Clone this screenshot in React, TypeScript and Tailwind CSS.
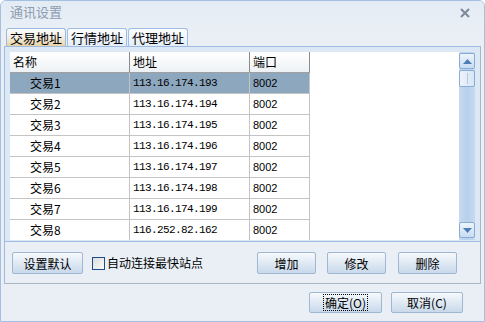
const rows = [
  { name: "交易1", ip: "113.16.174.193", port: "8002" },
  { name: "交易2", ip: "113.16.174.194", port: "8002" },
  { name: "交易3", ip: "113.16.174.195", port: "8002" },
  { name: "交易4", ip: "113.16.174.196", port: "8002" },
  { name: "交易5", ip: "113.16.174.197", port: "8002" },
  { name: "交易6", ip: "113.16.174.198", port: "8002" },
  { name: "交易7", ip: "113.16.174.199", port: "8002" },
  { name: "交易8", ip: "116.252.82.162", port: "8002" },
];

const cjk = { fontFamily: '"Noto Sans CJK SC", "Liberation Sans", sans-serif' };
const mono = { fontFamily: '"Liberation Mono", "DejaVu Sans Mono", monospace' };

const Btn = ({ label, className = "", focus = false }: { label: string; className?: string; focus?: boolean }) => (
  <div className={"flex items-center justify-center rounded-[2px] border border-[#9fb7d1] bg-gradient-to-b from-[#f6f9fc] to-[#c9d9eb] text-[12px] text-black " + className}>
    <span className={focus ? "outline outline-1 outline-dotted outline-black px-[1px] leading-[15px]" : "leading-[15px]"}>{label}</span>
  </div>
);

const Tab = ({ label, active = false }: { label: string; active?: boolean }) => (
  <div
    className={
      "h-[18px] w-[60px] flex items-center justify-center rounded-t-[3px] border border-b-0 text-[13px] text-black " +
      (active
        ? "border-[#9dbbe0] bg-gradient-to-b from-[#fbfcfd] via-[#f2ede2] to-[#e8d2a4]"
        : "border-[#9dbfe6] bg-gradient-to-b from-[#fdfeff] to-[#e3edf8]")
    }
  >
    {label}
  </div>
);

export default function App() {
  return (
    <div className="w-[485px] h-[322px] overflow-hidden bg-[#e9eff5] border border-[#a3c0e2] rounded-t-[6px] flex flex-col" style={cjk}>
      {/* title */}
      <div className="h-[28px] flex items-center justify-between pl-[9px] pr-[14px] bg-gradient-to-b from-[#e3ebf4] to-[#e9eff5]">
        <span className="text-[13px] text-[#8d9bb0] -mt-[6px]">通讯设置</span>
        <svg width="10" height="10" viewBox="0 0 10 10" className="-mt-[5px]">
          <path d="M1 1 L9 9 M9 1 L1 9" stroke="#7c889a" strokeWidth="2" />
        </svg>
      </div>

      {/* tabs */}
      <div className="flex items-end gap-[1px] pl-[5px] h-[17px]">
        <Tab label="交易地址" active />
        <Tab label="行情地址" />
        <Tab label="代理地址" />
      </div>

      {/* panel */}
      <div className="ml-[3px] w-[477px] h-[238px] border border-[#9dbbe0] border-r-[#a9b6c4] border-b-[#a9b6c4] flex flex-col">
        <div className="pl-[5px] pr-[5px] pt-[5px] pb-[1px] bg-[#dde8f5] border-b border-[#9dbbe0] flex">
          <div className="h-[188px] flex-1 bg-white flex overflow-hidden">
            <div className="flex-1 flex flex-col">
              <div className="h-[21px] flex text-[12px] bg-gradient-to-b from-white to-[#eef1f4] border-b border-[#a0a0a0] w-[300px] shrink-0">
                <div className="w-[120px] pl-[3px] flex items-center border-r border-[#8c8c8c]">名称</div>
                <div className="w-[120px] pl-[3px] flex items-center border-r border-[#8c8c8c]">地址</div>
                <div className="w-[60px] pl-[3px] flex items-center border-r border-[#8c8c8c]">端口</div>
              </div>
              {rows.map((r, i) => (
                <div key={r.name} className={"h-[21px] shrink-0 flex w-[300px] text-[12px] text-black border-b border-[#c4c4c4] " + (i === 0 ? "bg-[#8da7bf]" : "")}>
                  <div className="w-[120px] pl-[20px] flex items-center border-r border-[#c4c4c4]">{r.name}</div>
                  <div className="w-[120px] pl-[3px] flex items-center border-r border-[#c4c4c4] text-[11px] tracking-[-0.6px]" style={mono}>{r.ip}</div>
                  <div className="w-[60px] pl-[3px] flex items-center border-r border-[#c4c4c4] text-[11px]" style={{ fontFamily: '"Liberation Sans", sans-serif' }}>{r.port}</div>
                </div>
              ))}
            </div>
            {/* scrollbar */}
            <div className="w-[16px] flex flex-col pt-[1px] pb-[2px] bg-gradient-to-r from-[#c7daef] via-[#b8d0ec] to-[#c7daef]">
              <div className="h-[16px] rounded-[2px] border border-[#86abd6] bg-gradient-to-b from-[#eef4fb] to-[#c9dcf1] flex items-center justify-center">
                <svg width="9" height="5" viewBox="0 0 9 5"><path d="M4.5 0 L9 5 L0 5 Z" fill="#4d7db5" /></svg>
              </div>
              <div className="mt-[1px] h-[17px] rounded-[2px] border border-[#86abd6] bg-gradient-to-r from-[#edf3fa] to-[#d9e6f4] flex items-center justify-center">
                <div className="w-[1px] h-[11px] bg-[#b4c9e2]" />
              </div>
              <div className="flex-1" />
              <div className="h-[16px] rounded-[2px] border border-[#86abd6] bg-gradient-to-b from-[#eef4fb] to-[#c9dcf1] flex items-center justify-center">
                <svg width="9" height="5" viewBox="0 0 9 5"><path d="M0 0 L9 0 L4.5 5 Z" fill="#4d7db5" /></svg>
              </div>
            </div>
          </div>
        </div>

        <div className="flex items-center pt-[10px] pl-[7px]">
          <Btn label="设置默认" className="w-[71px] h-[22px]" />
          <div className="ml-[9px] w-[13px] h-[13px] border border-[#1d4e89] bg-gradient-to-br from-[#dcdcdc] to-[#fbfbfb]" />
          <span className="ml-[2px] text-[12px] leading-[16px] text-black">自动连接最快站点</span>
          <Btn label="增加" className="ml-[54px] w-[59px] h-[22px]" />
          <Btn label="修改" className="ml-[11px] w-[59px] h-[22px]" />
          <Btn label="删除" className="ml-[12px] w-[59px] h-[22px]" />
        </div>
      </div>

      {/* ok / cancel */}
      <div className="flex justify-end pr-[21px] mt-[8px] gap-[9px]">
        <Btn label="确定(O)" className="w-[73px] h-[21px]" focus />
        <Btn label="取消(C)" className="w-[72px] h-[21px]" />
      </div>
    </div>
  );
}
